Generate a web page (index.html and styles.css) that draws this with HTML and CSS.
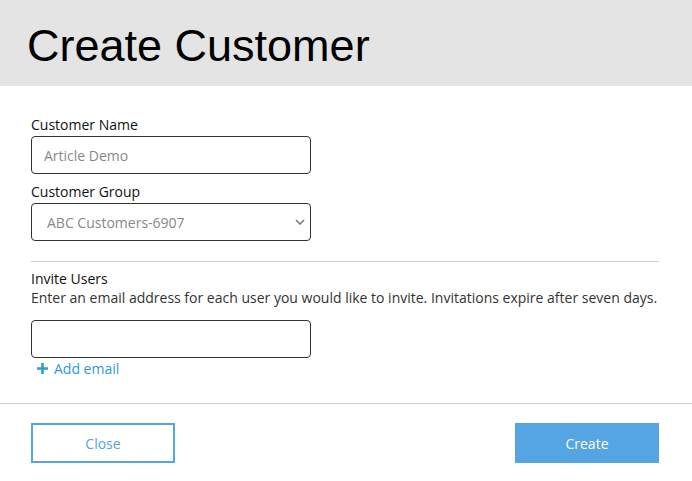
FILE: index.html
```html
<!DOCTYPE html>
<html lang="en">
  <head>
    <meta charset="UTF-8" />
    <title>Create Customer</title>
    <link rel="stylesheet" href="styles.css">
  </head>
  <body>
    <div class="header">
      <h1>Create Customer</h1>
    </div>

    <form class="body">
      <label class="label" for="customerName">Customer Name</label>
      <input type="text" id="customerName" class="field" placeholder="Article Demo" />

      <label class="label" for="customerGroup">Customer Group</label>
      <div class="select-wrap">
        <select id="customerGroup" class="field select">
          <option>ABC Customers-6907</option>
        </select>
        <svg class="chevron" width="10" height="6" viewBox="0 0 10 6">
          <path d="M1 1l4 4 4-4" fill="none" stroke="#777" stroke-width="1.5" />
        </svg>
      </div>

      <hr class="divider" />

      <div class="label">Invite Users</div>
      <p class="hint">Enter an email address for each user you would like to invite. Invitations expire after seven days.</p>
      <input type="email" class="field email" />
      <a class="add-email" href="#">
        <svg width="11" height="11" viewBox="0 0 11 11">
          <path d="M5.5 0v11M0 5.5h11" stroke="#2d9bd8" stroke-width="2.6" />
        </svg>
        Add email
      </a>
    </form>

    <div class="footer">
      <button class="btn-close" type="button">Close</button>
      <button class="btn-create" type="button">Create</button>
    </div>
  </body>
</html>
```

FILE: styles.css
```css
body {
  margin: 0;
  font-family: "Open Sans", Arial, sans-serif;
  background: white;
  color: #111;
  width: 692px;
}
.header {
  background-color: #e4e4e4;
  height: 86px;
  padding-left: 27px;
  box-sizing: border-box;
}
.header h1 {
  margin: 0;
  font-family: "Liberation Sans", Arial, sans-serif;
  font-weight: normal;
  font-size: 45px;
  line-height: 92px;
  color: #000;
}
.body {
  padding: 29px 33px 25px 31px;
  display: flex;
  flex-direction: column;
  align-items: flex-start;
}
.label {
  font-size: 14px;
  line-height: 19px;
  margin-bottom: 2px;
  display: block;
}
.field {
  width: 280px;
  height: 38px;
  box-sizing: border-box;
  border: 1px solid #333;
  border-radius: 4px;
  padding: 0 12px;
  font-family: "Open Sans", Arial, sans-serif;
  font-size: 14px;
  color: #888;
  background: white;
  margin: 0 0 8px 0;
}
.field::placeholder {
  color: #888;
}
.select-wrap {
  position: relative;
}
.select {
  appearance: none;
  -webkit-appearance: none;
  padding-left: 15px;
  margin-bottom: 0;
}
.chevron {
  position: absolute;
  right: 6px;
  top: 16px;
}
.divider {
  align-self: stretch;
  border: none;
  border-top: 1px solid #ccc;
  margin: 20px 0 7px 0;
}
.hint {
  margin: -2px 0 13px 0;
  font-size: 14px;
  line-height: 19px;
  color: #333;
  white-space: nowrap;
}
.email {
  margin-bottom: 1px;
}
.add-email {
  display: flex;
  align-items: center;
  gap: 6px;
  padding-left: 6px;
  font-size: 14px;
  line-height: 19px;
  color: #2d9bd8;
  text-decoration: none;
}
.footer {
  border-top: 1px solid #ccc;
  padding: 19px 33px 0 31px;
  display: flex;
  justify-content: space-between;
}
.footer button {
  width: 144px;
  height: 40px;
  font-family: "Open Sans", Arial, sans-serif;
  font-size: 14px;
  cursor: pointer;
}
.btn-close {
  background: white;
  border: 2px solid #55a4e3;
  color: #55a4e3;
}
.btn-create {
  background: #55a4e3;
  border: none;
  color: white;
}
```
